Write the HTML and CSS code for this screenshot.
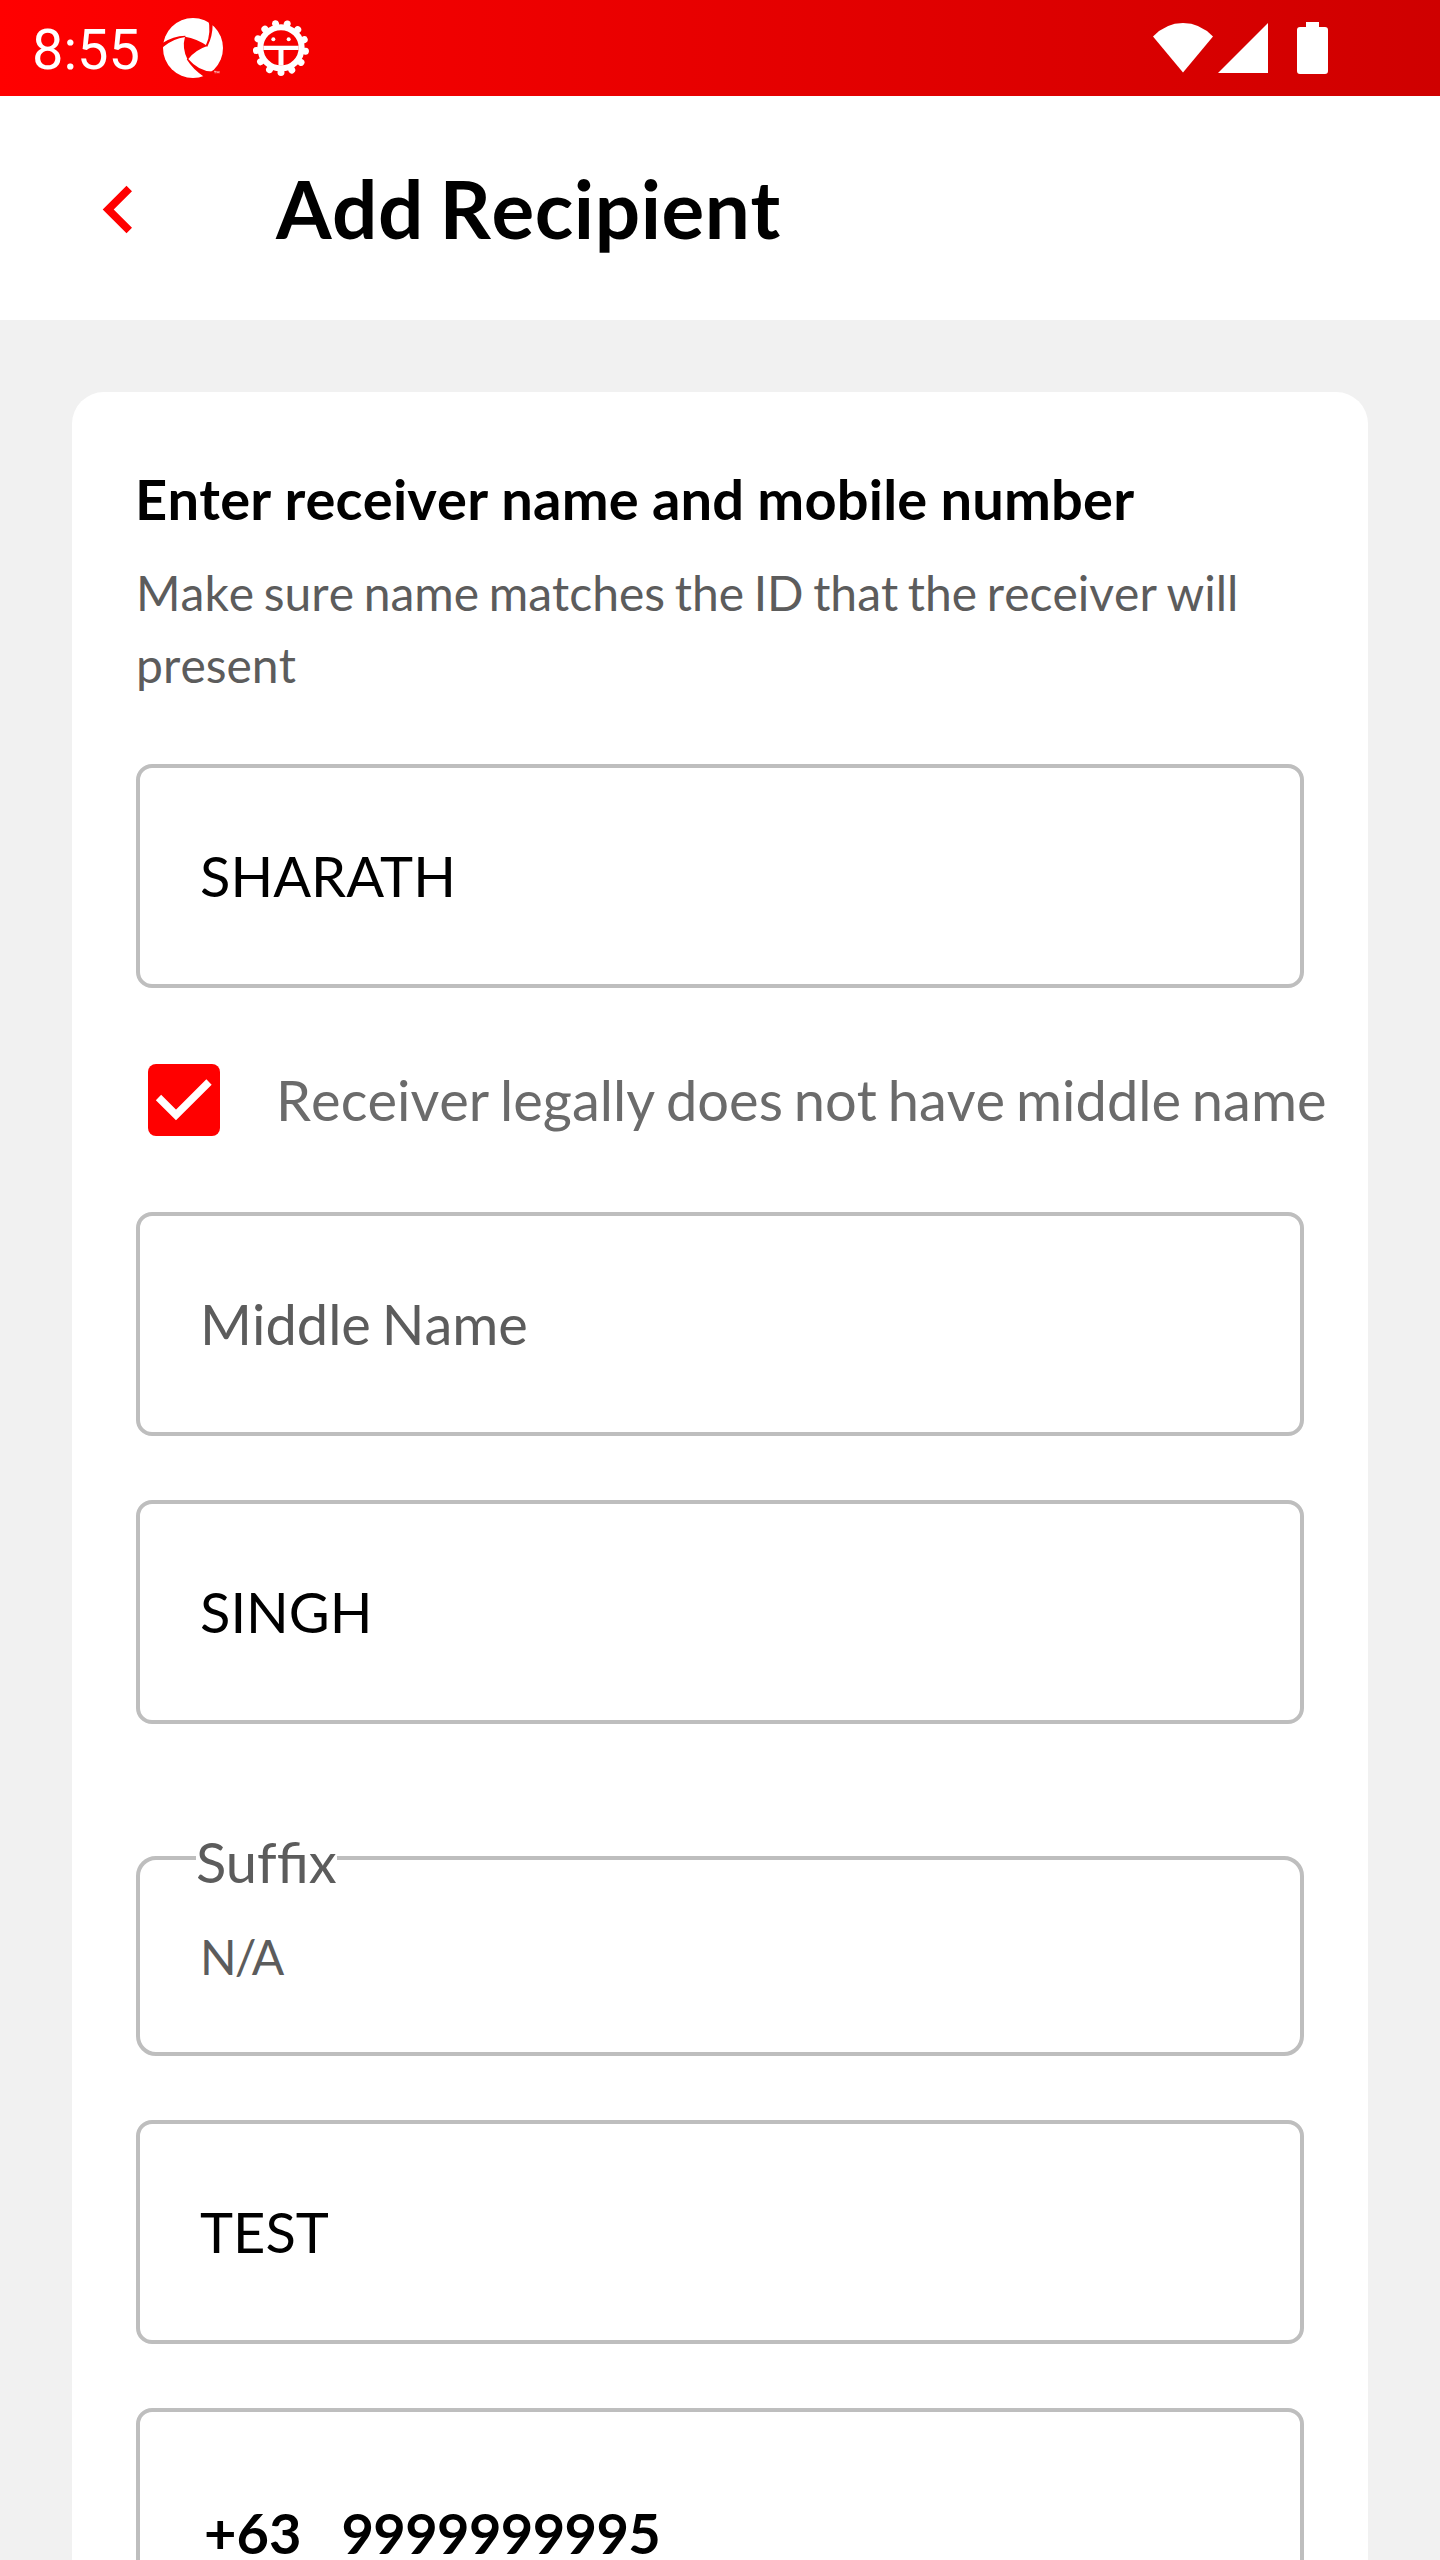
FILE: index.html
```html
<!DOCTYPE html>
<html lang="en">
<head>
<meta charset="utf-8">
<title>Add Recipient</title>
<link rel="stylesheet" href="styles.css">
</head>
<body>
<div class="screen">
  <div class="statusbar">
    <span class="clock">8:55</span>
    <svg class="appium" viewBox="480 42 204 204">
      <mask id="swirl">
        <circle cx="579" cy="144" r="90" fill="#fff"/>
        <path d="M555 110Q590 115 622 138Q585 150 563 179Q545 145 555 110Z" fill="#000"/>
        <path d="M486 130Q520 107 556 107L556 111Q520 115 486 143Z" fill="#000"/>
        <path d="M623 50L638 72Q638 110 622 140L617 137Q636 100 623 50Z" fill="#000"/>
        <path d="M560 178Q580 210 612 230L645 214Q600 218 564 176Z" fill="#000"/>
      </mask>
      <rect x="480" y="42" width="204" height="204" fill="#fff" mask="url(#swirl)"/>
      <path d="M642 214h7M645.500 214v6M651 220v-6l3 4l3-4v6" stroke="#fff" stroke-width="1.800" fill="none"/>
    </svg>
    <svg class="gear" viewBox="753 54 180 180">
      <circle cx="843" cy="143.500" r="62" fill="none" stroke="#fff" stroke-width="18"/>
      <circle cx="843" cy="143.500" r="74" fill="none" stroke="#fff" stroke-width="21" stroke-linecap="round" pathLength="130" stroke-dasharray="0.01 9.99" transform="rotate(90 843 143.500)"/>
      <path d="M790 143.500h106" stroke="#fff" stroke-width="13"/>
      <path d="M843 143v54" stroke="#fff" stroke-width="15"/>
      <circle cx="820" cy="118" r="6" fill="#fff"/>
      <circle cx="866" cy="118" r="6" fill="#fff"/>
    </svg>
    <svg class="signals" viewBox="0 0 180 60">
      <path d="M1 18.500Q14 5 31 5T61 18.500L31 54.500Z"/>
      <path d="M66 55L116 5V55Z"/>
      <path d="M154 4h13v5h6a3 3 0 0 1 3 3v41a3 3 0 0 1-3 3h-25a3 3 0 0 1-3-3v-41a3 3 0 0 1 3-3h6z"/>
    </svg>
  </div>
  <header class="appbar">
    <svg class="back" viewBox="0 0 32 52"><path d="M1.700 25.500L25.500 1.700L31 7.200L12.700 25.500L31 43.800L25.500 49.300Z" fill="#f00"/></svg>
    <h1 class="title">Add Recipient</h1>
  </header>
  <main class="card">
    <h2 class="heading">Enter receiver name and mobile number</h2>
    <p class="hint">Make sure name matches the ID that the receiver will present</p>
    <div class="field">SHARATH</div>
    <div class="option">
      <svg class="checkbox" viewBox="0 0 72 72"><rect width="72" height="72" rx="8" fill="#f00"/><path d="M10.500 33.500L28 51L61 18" fill="none" stroke="#fff" stroke-width="7.500"/></svg>
      <span class="option-label">Receiver legally does not have middle name</span>
    </div>
    <div class="field placeholder">Middle Name</div>
    <div class="field">SINGH</div>
    <fieldset class="suffix">
      <legend class="suffix-label">Suf&zwnj;fix</legend>
      <div class="suffix-value">N/A</div>
    </fieldset>
    <div class="field">TEST</div>
    <div class="field phone"><span class="prefix">+63</span><span class="number">9999999995</span></div>
  </main>
</div>
</body>
</html>
```
FILE: styles.css
```css
* { box-sizing: border-box; margin: 0; padding: 0; }

body { background: #f1f1f1; font-family: Lato, sans-serif; color: #000; }

svg { display: block; flex: none; }

.screen {
  width: 1440px;
  height: 2560px;
  overflow: hidden;
  background: #f1f1f1;
}

.statusbar {
  display: flex;
  align-items: center;
  height: 96px;
  padding-left: 32px;
  background: linear-gradient(90deg, #f00, #cf0000);
}

.clock {
  width: 128px;
  padding-top: 4px;
  font: 400 56px/64px Roboto, sans-serif;
  color: #fff;
}

.appium { width: 68px; height: 68px; }
.gear { width: 60px; height: 60px; margin-left: 23px; }
.signals { width: 180px; height: 60px; margin-left: 841px; fill: #fff; }

.appbar {
  display: flex;
  align-items: center;
  height: 224px;
  padding-left: 101px;
  background: #fff;
}

.back { width: 32px; height: 52px; margin-top: 3px; }

.title {
  margin-left: 143px;
  font-size: 80px;
  line-height: 96px;
  font-weight: 700;
  font-kerning: none;
  letter-spacing: 0.55px;
  word-spacing: -4.5px;
}

.card {
  height: 2300px;
  margin: 72px 72px 0;
  padding: 74px 64px 0;
  border-radius: 32px 32px 0 0;
  background: #fff;
}

.heading {
  margin-left: -1px;
  font-size: 56px;
  line-height: 66px;
  font-weight: 700;
  font-kerning: none;
  letter-spacing: 0.2px;
  word-spacing: -0.8px;
}

.hint {
  margin-top: 25px;
  /* keeps the short last word on a line of its own */
  padding-right: 40px;
  font-size: 48px;
  line-height: 72px;
  font-kerning: none;
  word-spacing: -2.7px;
  color: #5c5c5c;
}

.field {
  display: flex;
  align-items: center;
  height: 224px;
  margin-bottom: 64px;
  padding: 0 60px;
  border: 4px solid #bebebe;
  border-radius: 16px;
  font-size: 56px;
  line-height: 68px;
}

.hint + .field { margin-top: 63px; }

.placeholder {
  font-kerning: none;
  word-spacing: -3.6px;
  color: #5c5c5c;
}

.option {
  display: flex;
  align-items: center;
  height: 96px;
  margin-bottom: 64px;
  padding-left: 12px;
}

.checkbox { width: 72px; height: 72px; }

.option-label {
  margin-left: 56px;
  font-size: 56px;
  line-height: 68px;
  font-kerning: none;
  word-spacing: -3.5px;
  white-space: nowrap;
  color: #6b6b6b;
}

.suffix {
  height: 232px;
  margin: 100px 0 64px;
  padding: 0 60px;
  border: 4px solid #bebebe;
  border-radius: 20px;
  color: #5c5c5c;
}

.suffix-label {
  margin-left: -4px;
  padding-top: 8px;
  font-size: 56px;
  line-height: 60px;
}

.suffix-value {
  padding-top: 35px;
  font-size: 48px;
  line-height: 60px;
  letter-spacing: -2px;
}

.phone { padding: 25px 60px 0 64px; font-weight: 700; }
.number { margin-left: 40px; letter-spacing: -0.6px; }
```
